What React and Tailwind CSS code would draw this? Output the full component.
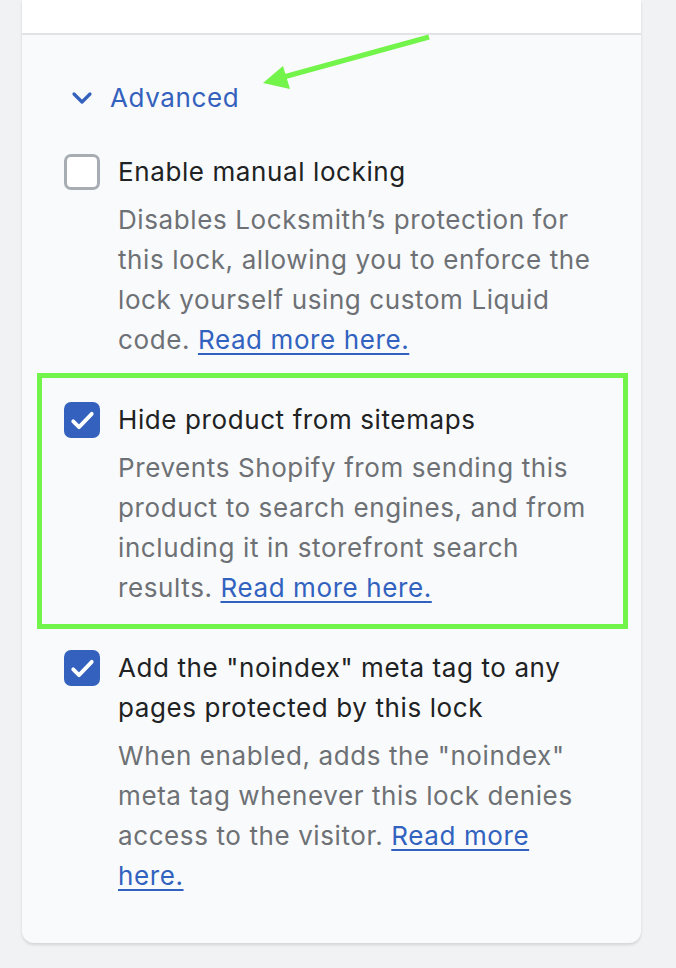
import React from 'react';

const Checkbox = ({ checked }) =>
    checked ? (
        <div className="w-9 h-9 mt-[2px] shrink-0 rounded-[7px] bg-[#3461bd] flex items-center justify-center">
            <svg viewBox="0 0 20 20" className="w-[29px] h-[29px]" fill="none" stroke="white" strokeWidth="2.6" strokeLinecap="round" strokeLinejoin="round">
                <path d="M3.6 10.6l4 4L16.4 5.4" />
            </svg>
        </div>
    ) : (
        <div className="w-9 h-9 mt-[2px] shrink-0 rounded-[7px] bg-white border-[3px] border-[#a8adb4]" />
    );

const Option = ({ checked, title, children }) => (
    <div className="flex items-start gap-[18px]">
        <Checkbox checked={checked} />
        <div className="flex-1">
            <p className="text-[26px] leading-[40px] tracking-[0.6px] text-[#202223]">{title}</p>
            <p className="mt-2 text-[26px] leading-[40px] tracking-[0.6px] text-[#6d7175]">{children}</p>
        </div>
    </div>
);

const ReadMore = ({ children = 'Read more here.' }) => (
    <a href="#" className="text-[#3262c0] underline underline-offset-[4px] decoration-[2px]">{children}</a>
);

export default function App() {
    return (
        <div className="relative min-h-[968px] bg-[#f1f2f4] px-[22px] pb-[25px] overflow-hidden" style={{ fontFamily: 'Inter, "Noto Sans", sans-serif' }}>
            <div className="w-[619px] bg-[#f9fafb] rounded-b-[12px] shadow-[0_2px_3px_rgba(0,0,0,0.12)] overflow-hidden">
                <div className="h-[35px] bg-white border-b-2 border-[#e1e3e5]" />
                <div className="pl-[42px] pr-[42px] pt-[43px] pb-[47px]">
                    <div className="flex items-center gap-[16px] h-10 pl-[6px] text-[#3461bd]">
                        <svg viewBox="0 0 24 24" className="w-6 h-6" fill="none" stroke="currentColor" strokeWidth="3.2" strokeLinecap="round" strokeLinejoin="round">
                            <path d="M4 8l8 8 8-8" />
                        </svg>
                        <span className="text-[26px] leading-[40px] tracking-[0.6px]">Advanced</span>
                    </div>
                    <div className="mt-[34px] flex flex-col gap-10">
                        <Option title="Enable manual locking">
                            Disables Locksmith’s protection for this lock, allowing you to enforce the lock yourself using custom Liquid code. <ReadMore />
                        </Option>
                        <Option checked title="Hide product from sitemaps">
                            Prevents Shopify from sending this product to search engines, and from including it in storefront search results. <ReadMore />
                        </Option>
                        <Option checked title={'Add the "noindex" meta tag to any pages protected by this lock'}>
                            When enabled, adds the "noindex" meta tag whenever this lock denies access to the visitor. <ReadMore />
                        </Option>
                    </div>
                </div>
            </div>

            {/* annotations */}
            <div className="absolute left-[37px] top-[373px] w-[591px] h-[256px] border-[5px] border-[#72f44a]" />
            <svg className="absolute left-0 top-0 w-[676px] h-[140px] pointer-events-none" viewBox="0 0 676 140">
                <line x1="429" y1="37" x2="280" y2="78" stroke="#72f44a" strokeWidth="5" />
                <polygon points="263,83 283,66 290,89" fill="#72f44a" />
            </svg>
        </div>
    );
}
